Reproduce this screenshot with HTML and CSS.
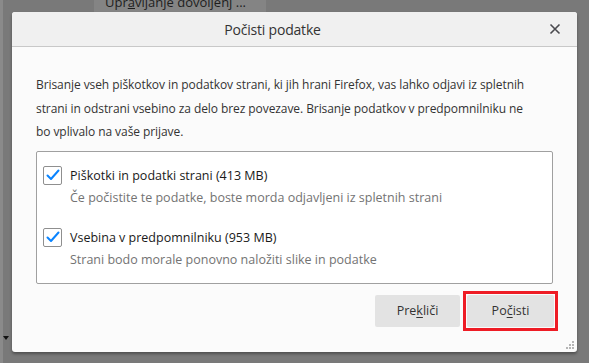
FILE: index.html
```html
<!DOCTYPE html>
<html lang="sl">
<head>
<meta charset="utf-8">
<title>Počisti podatke</title>
<link rel="stylesheet" href="styles.css">
</head>
<body>
<div class="backdrop">
  <div class="topbar">
    <div class="behind-btn">Upr<u>a</u>vljanje dovoljenj ...</div>
  </div>
  <div class="arrow"></div>
</div>

<div class="dialog">
  <div class="dialog-header">
    <div class="dialog-title">Počisti podatke</div>
    <svg class="close" width="12" height="12" viewBox="0 0 12 12"><path d="M1.5 1.5 L10.5 10.5 M10.5 1.5 L1.5 10.5" stroke="#4a4a4f" stroke-width="1.6" fill="none"/></svg>
  </div>
  <div class="dialog-body">
    <p class="desc">Brisanje vseh piškotkov in podatkov strani, ki jih hrani Firefox, vas lahko odjavi iz spletnih<br>strani in odstrani vsebino za delo brez povezave. Brisanje podatkov v predpomnilniku ne<br>bo vplivalo na vaše prijave.</p>
    <div class="options">
      <div class="option">
        <div class="option-row">
          <span class="checkbox"><svg width="14" height="12" viewBox="0 0 14 12"><path d="M1.5 6.5 L5 10 L12.5 1.5" stroke="#0a84ff" stroke-width="2" fill="none" stroke-linecap="round" stroke-linejoin="round"/></svg></span>
          <span class="option-label">Piškotki in podatki strani (413 MB)</span>
        </div>
        <div class="option-desc">Če počistite te podatke, boste morda odjavljeni iz spletnih strani</div>
      </div>
      <div class="option">
        <div class="option-row">
          <span class="checkbox"><svg width="14" height="12" viewBox="0 0 14 12"><path d="M1.5 6.5 L5 10 L12.5 1.5" stroke="#0a84ff" stroke-width="2" fill="none" stroke-linecap="round" stroke-linejoin="round"/></svg></span>
          <span class="option-label">Vsebina v predpomnilniku (953 MB)</span>
        </div>
        <div class="option-desc">Strani bodo morale ponovno naložiti slike in podatke</div>
      </div>
    </div>
    <div class="buttons">
      <button class="btn">Pre<u>k</u>liči</button>
      <button class="btn btn-focus">Po<u>č</u>isti</button>
    </div>
    <div class="grip">
      <svg width="9" height="9" viewBox="0 0 9 9"><g fill="#b5b5b5"><rect x="6" y="0" width="2" height="2"/><rect x="3" y="3" width="2" height="2"/><rect x="6" y="3" width="2" height="2"/><rect x="0" y="6" width="2" height="2"/><rect x="3" y="6" width="2" height="2"/><rect x="6" y="6" width="2" height="2"/></g></svg>
    </div>
  </div>
</div>
</body>
</html>
```

FILE: styles.css
```css
* { box-sizing: border-box; }
html, body {
  margin: 0;
  padding: 0;
  width: 589px;
  height: 363px;
  overflow: hidden;
}
body {
  background: #797979;
  font-family: "Open Sans", "Noto Sans", sans-serif;
  position: relative;
}
.backdrop {
  height: 363px;
  border-left: 3px solid #8a8a8a;
}
.topbar {
  height: 12px;
  overflow: hidden;
  padding-left: 91px;
}
.behind-btn {
  width: 172px;
  background: #848484;
  color: #1e1e1e;
  font-size: 13px;
  line-height: 12px;
  padding-left: 11px;
  position: relative;
  top: -4px;
  height: 16px;
}
.behind-btn u { text-decoration-thickness: 1px; }
.arrow {
  position: absolute;
  left: 3px;
  top: 336px;
  width: 0;
  height: 0;
  border-left: 3px solid transparent;
  border-right: 3px solid transparent;
  border-top: 4px solid #111;
}

.dialog {
  position: absolute;
  left: 12px;
  top: 12px;
  width: 565px;
  height: 340px;
  background: #fbfbfb;
  border-radius: 3px;
  box-shadow: 0 2px 3px rgba(0,0,0,0.35);
  display: flex;
  flex-direction: column;
  overflow: hidden;
}
.dialog-header {
  height: 35px;
  background: #f0f0f0;
  border-bottom: 1px solid #c8c8c8;
  display: flex;
  align-items: center;
  justify-content: center;
  padding-right: 44px;
  position: relative;
}
.dialog-title {
  font-size: 14px;
  letter-spacing: -0.2px;
  color: #333;
  padding-top: 1px;
}
.close {
  position: absolute;
  right: 16px;
  top: 11px;
}
.dialog-body {
  flex: 1;
  padding: 26px 24px 0 24px;
  display: flex;
  flex-direction: column;
  position: relative;
}
.desc {
  margin: 0;
  font-size: 12px;
  letter-spacing: -0.075px;
  line-height: 23.5px;
  color: #333;
  white-space: nowrap;
}
.options {
  margin-top: 7px;
  width: 517px;
  height: 133px;
  border: 1px solid #a0a0a0;
  border-radius: 2px;
  background: #fff;
  padding: 14px 0 0 6px;
  display: flex;
  flex-direction: column;
  gap: 21px;
}
.option-row {
  display: flex;
  align-items: center;
  gap: 8px;
  height: 19px;
}
.checkbox {
  width: 19px;
  height: 19px;
  border: 1px solid #8f8f8f;
  border-radius: 2px;
  background: #fff;
  display: flex;
  align-items: center;
  justify-content: center;
}
.option-label {
  font-size: 12.5px;
  color: #1a1a1a;
}
.option-desc {
  font-size: 12.5px;
  color: #737373;
  padding-left: 27px;
  margin-top: 3px;
  line-height: 19px;
}
.buttons {
  margin-top: 11px;
  display: flex;
  justify-content: flex-end;
  gap: 7px;
  margin-right: -1px;
}
.btn {
  height: 32px;
  border: none;
  border-radius: 2px;
  background: #e3e3e3;
  font-family: "Open Sans", "Noto Sans", sans-serif;
  font-size: 12.5px;
  color: #333;
  padding: 0;
  width: 85px;
  position: relative;
}
.btn-focus {
  width: 87px;
  outline: none;
}
.btn-focus::after {
  content: "";
  position: absolute;
  left: -4px;
  top: -4px;
  right: -4px;
  bottom: -4px;
  border: 3px solid #ee1c25;
}
.btn u { text-decoration-thickness: 1px; text-underline-offset: 2px; }
.grip {
  position: absolute;
  right: 2px;
  bottom: 2px;
  width: 9px;
  height: 9px;
  display: flex;
}
```
